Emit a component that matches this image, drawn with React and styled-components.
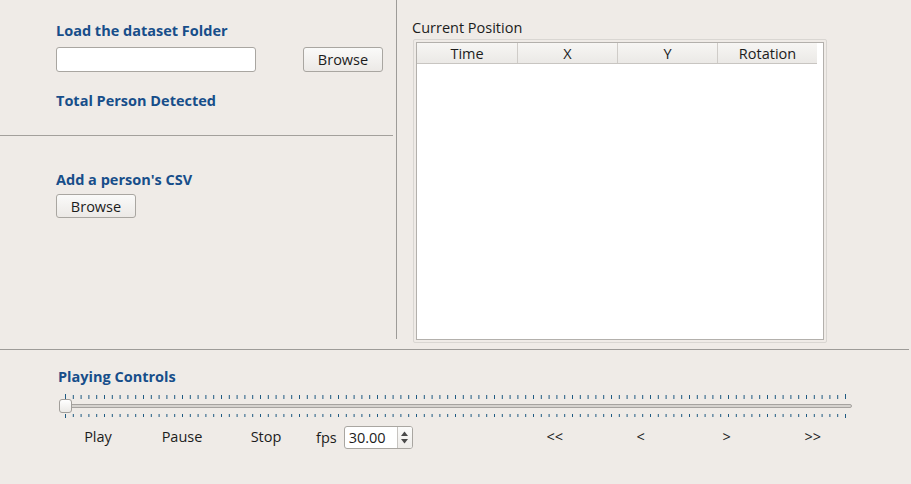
import React from "react";
import styled, { createGlobalStyle } from "styled-components";

const GlobalStyle = createGlobalStyle`
  html, body {
    margin: 0;
    padding: 0;
    background: #efebe7;
  }
  * {
    box-sizing: border-box;
  }
`;

// styled-components

const Window = styled.div`
  width: 911px;
  height: 484px;
  background: #efebe7;
  font-family: "Open Sans", "DejaVu Sans", sans-serif;
  font-size: 14.5px;
  color: #1c1c1c;
  overflow: hidden;
`;

const TopArea = styled.div`
  display: flex;
  align-items: flex-start;
  height: 349px;
`;

const LeftPanel = styled.div`
  width: 397px;
  height: 339px;
  border-right: 1px solid #9d9b98;
  display: flex;
  flex-direction: column;
`;

const Section = styled.div`
  display: flex;
  flex-direction: column;
  padding-left: 56px;
  padding-top: ${(p) => p.$top}px;
  height: ${(p) => p.$height}px;
`;

const Heading = styled.div`
  font-weight: 700;
  font-size: 14.5px;
  color: #174e8a;
  line-height: 18px;
  margin-bottom: ${(p) => p.$gap || 0}px;
`;

const FieldRow = styled.div`
  display: flex;
  align-items: center;
  gap: 47px;
  margin-bottom: 20px;
`;

const TextInput = styled.input`
  width: 200px;
  height: 25px;
  border: 1px solid #a9a6a1;
  border-radius: 3px;
  background: #fff;
  outline: none;
  padding: 0 6px;
`;

const PushButton = styled.button`
  width: 80px;
  height: ${(p) => p.$h || 25}px;
  border: 1px solid #a9a6a1;
  border-radius: 3px;
  background: linear-gradient(#fafaf9, #ece9e6);
  font-family: inherit;
  font-size: 14.5px;
  color: #1c1c1c;
  padding: 0;
`;

const Divider = styled.div`
  height: 1px;
  background: #a3a09c;
  margin-right: 3px;
`;

const RightPanel = styled.div`
  flex: 1;
  padding: 19px 0 0 15px;
  display: flex;
  flex-direction: column;
`;

const Caption = styled.div`
  line-height: 18px;
  margin-bottom: 2px;
`;

const TableFrame = styled.div`
  width: 414px;
  height: 304px;
  margin-left: 1px;
  border: 1px solid #d9d6d2;
  border-radius: 2px;
  padding: 2px;
`;

const TableInner = styled.div`
  width: 100%;
  height: 100%;
  background: #fff;
  border: 1px solid #b3b0ac;
`;

const HeaderRow = styled.div`
  display: flex;
  width: 400px;
  height: 21px;
  background: linear-gradient(#f7f6f4, #ebe9e6);
  border-bottom: 1px solid #c8c5c1;
`;

const HeaderCell = styled.div`
  width: 100px;
  text-align: center;
  line-height: 21px;
  border-left: ${(p) => (p.$first ? "none" : "1px solid #cfccc8")};
`;

const BottomArea = styled.div`
  border-top: 1px solid #9d9b98;
  margin-right: 2px;
  padding: 18px 0 0 58px;
  display: flex;
  flex-direction: column;
`;

const SliderBox = styled.div`
  position: relative;
  width: 793px;
  height: 26px;
  margin: 7px 0 0 1px;
`;

const Ticks = styled.svg`
  position: absolute;
  left: 0;
  top: 0;
`;

const Groove = styled.div`
  position: absolute;
  left: 2px;
  right: 0;
  top: 11px;
  height: 4px;
  border: 1px solid #a6a3a0;
  border-radius: 2px;
  background: #d6d3cf;
`;

const Handle = styled.div`
  position: absolute;
  left: 0;
  top: 6px;
  width: 13px;
  height: 14px;
  border: 1px solid #a19e9a;
  border-radius: 3px;
  background: linear-gradient(#ffffff, #ebe9e6);
`;

const ControlRow = styled.div`
  display: flex;
  align-items: center;
  margin: 6px 0 0 -2px;
  height: 24px;
`;

const FlatButton = styled.div`
  width: ${(p) => p.$w || 84}px;
  text-align: center;
  line-height: 24px;
`;

const NavGroup = styled.div`
  display: flex;
  margin-left: 99px;
`;

const FpsLabel = styled.span`
  margin: 0 7px 0 8px;
`;

const SpinBox = styled.div`
  display: flex;
  width: 69px;
  height: 23px;
  border: 1px solid #a9a6a1;
  border-radius: 3px;
  background: #fff;
  overflow: hidden;
`;

const SpinValue = styled.div`
  flex: 1;
  padding-left: 4px;
  line-height: 21px;
`;

const SpinArrows = styled.div`
  width: 15px;
  border-left: 1px solid #c7c4c0;
  background: linear-gradient(#fbfbfa, #eeece9);
  display: flex;
  align-items: center;
  justify-content: center;
`;

const TICK_COUNT = 101;
const TICK_STEP = 7.8;

const SliderTicks = () => {
  const lines = [];
  for (let i = 0; i < TICK_COUNT; i++) {
    const x = 6.5 + i * TICK_STEP;
    const edge = i === 0 || i === TICK_COUNT - 1;
    lines.push(<line key={"t" + i} x1={x} x2={x} y1={edge ? 1 : 2} y2={6} />);
    lines.push(<line key={"b" + i} x1={x} x2={x} y1={21} y2={edge ? 25 : 24} />);
  }
  return (
    <Ticks width="793" height="26" stroke="#1f5a82" strokeWidth="1">
      {lines}
    </Ticks>
  );
};

const App = () => {
  return (
    <Window>
      <GlobalStyle />
      <TopArea>
        <LeftPanel>
          <Section $top={22} $height={135}>
            <Heading $gap={7}>Load the dataset Folder</Heading>
            <FieldRow>
              <TextInput />
              <PushButton>Browse</PushButton>
            </FieldRow>
            <Heading>Total Person Detected</Heading>
          </Section>
          <Divider />
          <Section $top={35}>
            <Heading $gap={5}>Add a person's CSV</Heading>
            <PushButton $h={24}>Browse</PushButton>
          </Section>
        </LeftPanel>
        <RightPanel>
          <Caption>Current Position</Caption>
          <TableFrame>
            <TableInner>
              <HeaderRow>
                <HeaderCell $first>Time</HeaderCell>
                <HeaderCell>X</HeaderCell>
                <HeaderCell>Y</HeaderCell>
                <HeaderCell>Rotation</HeaderCell>
              </HeaderRow>
            </TableInner>
          </TableFrame>
        </RightPanel>
      </TopArea>
      <BottomArea>
        <Heading>Playing Controls</Heading>
        <SliderBox>
          <SliderTicks />
          <Groove />
          <Handle />
        </SliderBox>
        <ControlRow>
          <FlatButton>Play</FlatButton>
          <FlatButton>Pause</FlatButton>
          <FlatButton>Stop</FlatButton>
          <FpsLabel>fps</FpsLabel>
          <SpinBox>
            <SpinValue>30.00</SpinValue>
            <SpinArrows>
              <svg width="9" height="17" viewBox="0 0 9 17">
                <path d="M1 7 L4.5 2.5 L8 7 Z" fill="#4a4a4a" />
                <path d="M1 10 L4.5 14.5 L8 10 Z" fill="#4a4a4a" />
              </svg>
            </SpinArrows>
          </SpinBox>
          <NavGroup>
            <FlatButton $w={86}>&lt;&lt;</FlatButton>
            <FlatButton $w={86}>&lt;</FlatButton>
            <FlatButton $w={86}>&gt;</FlatButton>
            <FlatButton $w={86}>&gt;&gt;</FlatButton>
          </NavGroup>
        </ControlRow>
      </BottomArea>
    </Window>
  );
};

export default App;
